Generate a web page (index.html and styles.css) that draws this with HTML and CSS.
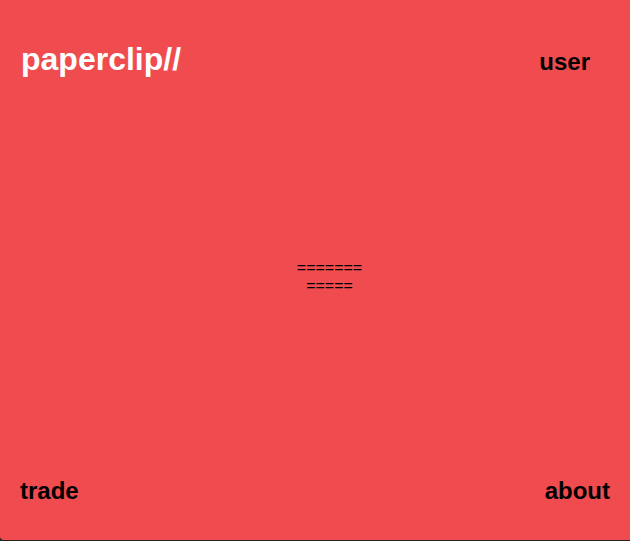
FILE: index.html
```html
<!DOCTYPE html>
<html>
<head>
<meta charset="utf-8">
<link rel="stylesheet" href="styles.css">
</head>
<body>
<div class="app">
  <header class="top">
    <div class="logo">paperclip//</div>
    <div class="user">user</div>
  </header>
  <main class="center">
    <div class="loader">=======<br>=====</div>
  </main>
  <footer class="bottom">
    <div class="link">trade</div>
    <div class="link">about</div>
  </footer>
</div>
</body>
</html>
```

FILE: styles.css
```css
html, body {
  margin: 0;
  padding: 0;
  height: 100%;
  background: #222;
}
.app {
  box-sizing: border-box;
  height: 540px;
  background: #f04b4f;
  border-bottom-left-radius: 4px;
  display: flex;
  flex-direction: column;
  font-family: "Liberation Sans", Arial, sans-serif;
  font-weight: bold;
  color: #000;
}
.top {
  display: flex;
  justify-content: space-between;
  align-items: baseline;
  padding: 41px 40px 0 21px;
}
.logo {
  color: #fff;
  font-size: 32px;
  line-height: 36px;
}
.user {
  font-size: 24px;
}
.center {
  flex: 1;
  display: flex;
  align-items: center;
  justify-content: center;
  padding-left: 29px;
  padding-bottom: 1px;
}
.loader {
  font-size: 16px;
  font-weight: normal;
  line-height: 18px;
  text-align: center;
}
.bottom {
  display: flex;
  justify-content: space-between;
  padding: 0 20px 36px 20px;
}
.link {
  font-size: 24px;
  line-height: 26px;
}
```
